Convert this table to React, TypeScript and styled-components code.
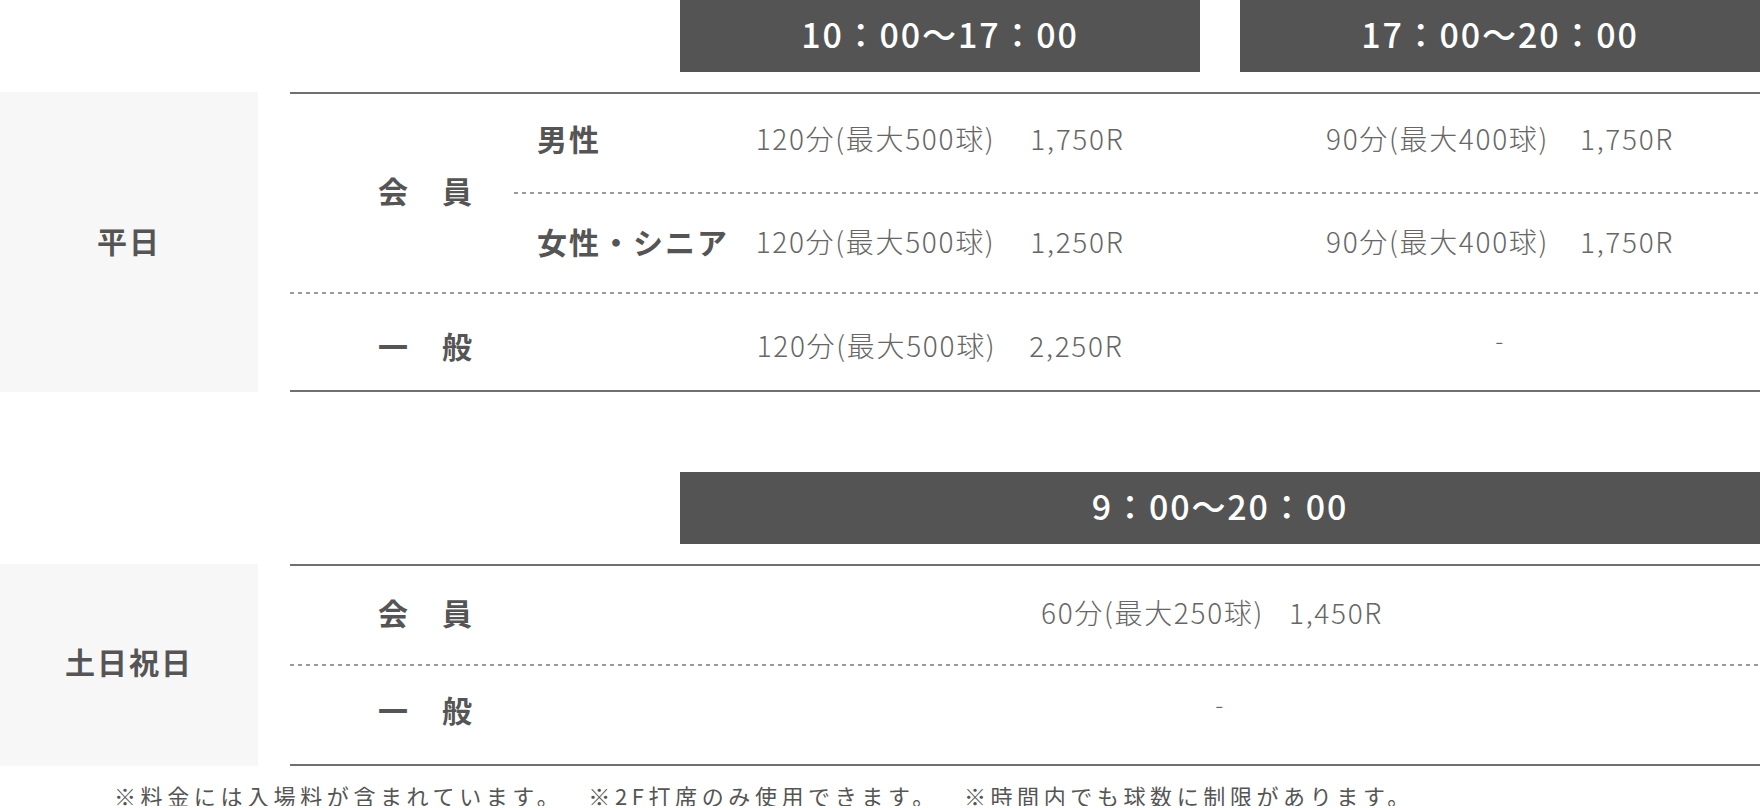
import React from 'react';
import styled, { createGlobalStyle } from 'styled-components';

const Global = createGlobalStyle`
  html, body { margin: 0; padding: 0; background: #fff; }
  body {
    font-family: "Noto Sans CJK JP", "Noto Sans", sans-serif;
    color: #555;
  }
  * { box-sizing: border-box; }
`;

const Page = styled.div`
  width: 1760px;
  display: flex;
  flex-direction: column;
`;

const Section = styled.section<{ $mt?: number }>`
  display: flex;
  flex-direction: column;
  margin-top: ${(p) => p.$mt ?? 0}px;
`;

const HeaderRow = styled.div`
  display: flex;
  gap: 40px;
  padding-left: 680px;
  margin-bottom: 20px;
`;

const TimeHeader = styled.div`
  flex: 1;
  height: 72px;
  padding-bottom: 6px;
  background: #545454;
  color: #fff;
  font-size: 34px;
  font-weight: 500;
  letter-spacing: 0.055em;
  display: flex;
  align-items: center;
  justify-content: center;
`;

const Body = styled.div`
  display: flex;
  gap: 32px;
`;

const DayCell = styled.div<{ $shift: number }>`
  width: 258px;
  flex: none;
  background: #f7f7f7;
  display: flex;
  align-items: center;
  justify-content: center;
  padding-bottom: ${(p) => -2 * p.$shift}px;
  font-size: 30px;
  font-weight: 700;
  letter-spacing: 2px;
  color: #555;
`;

const Table = styled.div`
  flex: 1;
  border-top: 2px solid #707070;
  border-bottom: 2px solid #707070;
  display: flex;
  flex-direction: column;
`;

const Dashed = styled.div`
  height: 2px;
  background-image: repeating-linear-gradient(
    to right,
    #9a9a9a 0 4px,
    transparent 4px 8px
  );
`;

const Group = styled.div`
  display: flex;
`;

const SubRows = styled.div`
  flex: 1;
  display: flex;
  flex-direction: column;
`;

const Row = styled.div<{ $cols: string; $h: number; $shift?: number }>`
  display: grid;
  grid-template-columns: ${(p) => p.$cols};
  column-gap: 40px;
  height: ${(p) => p.$h}px;
  align-items: center;
  padding-top: ${(p) => Math.max(0, 2 * (p.$shift ?? 0))}px;
  padding-bottom: ${(p) => Math.max(0, -2 * (p.$shift ?? 0))}px;
`;

const Label = styled.div<{ $pl: number; $w?: number; $pb?: number }>`
  padding-left: ${(p) => p.$pl}px;
  padding-bottom: ${(p) => p.$pb ?? 0}px;
  ${(p) => (p.$w ? `width: ${p.$w}px; flex: none;` : '')}
  display: flex;
  align-items: center;
  font-size: 30px;
  font-weight: 700;
  letter-spacing: 2px;
  color: #555;
  white-space: nowrap;
`;

const PriceCell = styled.div<{ $offset?: number }>`
  display: flex;
  align-items: center;
  justify-content: center;
  padding-right: ${(p) => p.$offset ?? 0}px;
  font-size: 28px;
  font-weight: 300;
  letter-spacing: 0.06em;
  color: #666;
  white-space: nowrap;
`;

const Amount = styled.span<{ $gap: number }>`
  margin-left: ${(p) => p.$gap}px;
`;

const Dash = styled.span`
  font-size: 24px;
  transform: translateY(-6px);
`;

const Note = styled.p`
  margin: 18px 0 0;
  padding-left: 114px;
  font-size: 22px;
  line-height: 22px;
  letter-spacing: 4.6px;
  color: #555;
  white-space: nowrap;
`;

const Sep = styled.span`
  display: inline-block;
  width: 25px;
`;

const Price = ({
  d,
  a,
  gap,
  offset,
}: {
  d: string;
  a: string;
  gap: number;
  offset?: number;
}) => (
  <PriceCell $offset={offset}>
    <span>{d}</span>
    <Amount $gap={gap}>{a}</Amount>
  </PriceCell>
);

const SUB_COLS = '126px 520px 520px';
const FULL_COLS = '350px 520px 520px';
const WEEKEND_COLS = '350px 1fr';

export default function App() {
  return (
    <>
      <Global />
      <Page>
        <Section>
          <HeaderRow>
            <TimeHeader>10：00〜17：00</TimeHeader>
            <TimeHeader>17：00〜20：00</TimeHeader>
          </HeaderRow>
          <Body>
            <DayCell $shift={-2}>平日</DayCell>
            <Table>
              <Group>
                <Label $pl={88} $w={224} $pb={6}>会　員</Label>
                <SubRows>
                  <Row $cols={SUB_COLS} $h={98} $shift={-5}>
                    <Label $pl={23}>男性</Label>
                    <Price d="120分(最大500球)" a="1,750R" gap={35} />
                    <Price d="90分(最大400球)" a="1,750R" gap={31} />
                  </Row>
                  <Dashed />
                  <Row $cols={SUB_COLS} $h={98} $shift={-2}>
                    <Label $pl={23}>女性・シニア</Label>
                    <Price d="120分(最大500球)" a="1,250R" gap={35} />
                    <Price d="90分(最大400球)" a="1,750R" gap={31} />
                  </Row>
                </SubRows>
              </Group>
              <Dashed />
              <Row $cols={FULL_COLS} $h={96} $shift={3}>
                <Label $pl={88}>一　般</Label>
                <Price d="120分(最大500球)" a="2,250R" gap={33} />
                <PriceCell>
                  <Dash>-</Dash>
                </PriceCell>
              </Row>
            </Table>
          </Body>
        </Section>

        <Section $mt={80}>
          <HeaderRow>
            <TimeHeader>9：00〜20：00</TimeHeader>
          </HeaderRow>
          <Body>
            <DayCell $shift={-4}>土日祝日</DayCell>
            <Table>
              <Row $cols={WEEKEND_COLS} $h={98} $shift={-3}>
                <Label $pl={88}>会　員</Label>
                <Price d="60分(最大250球)" a="1,450R" gap={25} offset={16} />
              </Row>
              <Dashed />
              <Row $cols={WEEKEND_COLS} $h={98} $shift={-6}>
                <Label $pl={88}>一　般</Label>
                <PriceCell>
                  <Dash>-</Dash>
                </PriceCell>
              </Row>
            </Table>
          </Body>
        </Section>

        <Note>
          ※料金には入場料が含まれています。<Sep />※2F打席のみ使用できます。<Sep />※時間内でも球数に制限があります。
        </Note>
      </Page>
    </>
  );
}
